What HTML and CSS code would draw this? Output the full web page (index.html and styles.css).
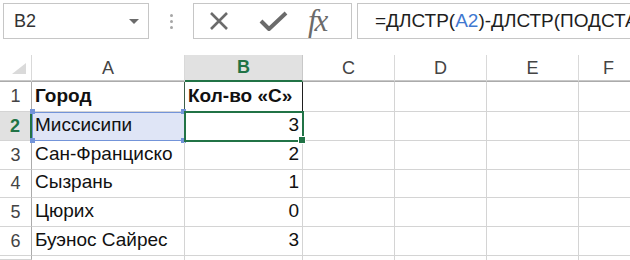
FILE: index.html
```html
<!DOCTYPE html>
<html lang="ru">
<head>
    <meta charset="UTF-8">
    <title>Кол-во «С»</title>
    <link rel="stylesheet" href="styles.css">
</head>
<body>
    <div class="toolbar">
        <div class="name-box">
            <span>B2</span>
            <span class="arrow"></span>
        </div>
        <div class="grip"><i></i><i></i><i></i></div>
        <div class="buttons">
            <svg class="icon" width="22" height="22" viewBox="0 0 22 22">
                <path d="M3 3 L19 19 M19 3 L3 19" stroke="#6b6b6b" stroke-width="2.6" fill="none"/>
            </svg>
            <svg class="icon check" width="29" height="22" viewBox="0 0 29 22">
                <path d="M2 11 L10 19 L27 3" stroke="#6b6b6b" stroke-width="4" fill="none" stroke-linejoin="round"/>
            </svg>
            <span class="fx">fx</span>
        </div>
        <div class="formula">=ДЛСТР(<span class="ref">A2</span>)-ДЛСТР(ПОДСТАВИТЬ(A2;"С";""))</div>
    </div>

    <div class="sheet">
        <div class="corner"><span class="tri"></span></div>
        <div class="col">A</div>
        <div class="col active">B</div>
        <div class="col">C</div>
        <div class="col">D</div>
        <div class="col">E</div>
        <div class="col">F</div>

        <div class="row">1</div>
        <div class="cell bold">Город</div>
        <div class="cell bold b1">Кол-во «С»</div>
        <div class="cell"></div><div class="cell"></div><div class="cell"></div><div class="cell"></div>

        <div class="row active">2</div>
        <div class="cell ref-range">Миссисипи</div>
        <div class="cell num current">3</div>
        <div class="cell"></div><div class="cell"></div><div class="cell"></div><div class="cell"></div>

        <div class="row">3</div>
        <div class="cell">Сан-Франциско</div>
        <div class="cell num">2</div>
        <div class="cell"></div><div class="cell"></div><div class="cell"></div><div class="cell"></div>

        <div class="row">4</div>
        <div class="cell">Сызрань</div>
        <div class="cell num">1</div>
        <div class="cell"></div><div class="cell"></div><div class="cell"></div><div class="cell"></div>

        <div class="row">5</div>
        <div class="cell">Цюрих</div>
        <div class="cell num">0</div>
        <div class="cell"></div><div class="cell"></div><div class="cell"></div><div class="cell"></div>

        <div class="row">6</div>
        <div class="cell">Буэнос Сайрес</div>
        <div class="cell num">3</div>
        <div class="cell"></div><div class="cell"></div><div class="cell"></div><div class="cell"></div>

        <div class="row"></div>
        <div class="cell"></div><div class="cell"></div>
        <div class="cell"></div><div class="cell"></div><div class="cell"></div><div class="cell"></div>
    </div>
</body>
</html>
```

FILE: styles.css
```css
body {
    margin: 0;
    background: #ffffff;
    font-family: "Liberation Sans", Arial, sans-serif;
    color: #1e1e1e;
    overflow: hidden;
    width: 630px;
    height: 260px;
}

/* formula bar */

.toolbar {
    display: flex;
    align-items: stretch;
    height: 36px;
    padding: 3px 0 16px 3px;
}

.name-box {
    width: 146px;
    border: 1px solid #c6c6c6;
    display: flex;
    align-items: center;
    justify-content: space-between;
    padding: 0 9px 0 10px;
    box-sizing: border-box;
    font-size: 18px;
    color: #333;
}

.name-box .arrow {
    width: 0;
    height: 0;
    border-left: 5px solid transparent;
    border-right: 5px solid transparent;
    border-top: 5px solid #6b6b6b;
}

.grip {
    width: 44px;
    display: flex;
    flex-direction: column;
    align-items: center;
    justify-content: center;
    gap: 3px;
}

.grip i {
    width: 3px;
    height: 3px;
    background: #a6a6a6;
    border-radius: 50%;
}

.buttons {
    width: 159px;
    border: 1px solid #c6c6c6;
    box-sizing: border-box;
    display: flex;
    align-items: center;
    padding-left: 14px;
}

.buttons .check {
    margin-left: 29px;
}

.fx {
    margin-left: 20px;
    font-family: "Liberation Serif", "Times New Roman", serif;
    font-style: italic;
    font-size: 31px;
    color: #6b6b6b;
    letter-spacing: -2px;
    line-height: 1;
    margin-top: -2px;
}

.formula {
    flex: 1;
    margin-left: 5px;
    border: 1px solid #c6c6c6;
    border-right: none;
    padding: 0 0 0 17px;
    font-size: 19px;
    line-height: 34px;
    white-space: nowrap;
    overflow: hidden;
    color: #1e1e1e;
}

.formula .ref {
    color: #3f78d0;
}

/* grid */

.sheet {
    display: grid;
    grid-template-columns: 32px 153px 118px 92px 92px 92px 60px;
    grid-template-rows: 27px 30px 29px 29px 28px 29px 29px 4px;
    font-size: 19px;
}

.corner,
.col {
    border-bottom: 1px solid #ababab;
    border-right: 1px solid #d9d9d9;
    box-shadow: inset 0 -1px 0 #c8c8c8;
}

.corner {
    position: relative;
}

.corner .tri {
    position: absolute;
    right: 5px;
    bottom: 7px;
    width: 0;
    height: 0;
    border-left: 14px solid transparent;
    border-bottom: 11px solid #dadada;
}

.col {
    display: flex;
    align-items: center;
    justify-content: center;
    color: #444;
    font-size: 18px;
}

.col.active {
    background: #e1e1e1;
    color: #217346;
    font-weight: bold;
    border-bottom: 2px solid #217346;
    box-shadow: none;
    border-right-color: #c8c8c8;
}

.row {
    display: flex;
    align-items: center;
    justify-content: center;
    color: #444;
    font-size: 18px;
    border-right: 1px solid #ababab;
    border-bottom: 1px solid #d4d4d4;
}

.row.active {
    background: #e1e1e1;
    color: #217346;
    font-weight: bold;
    border-right: 2px solid #217346;
}

.cell {
    border-right: 1px solid #d4d4d4;
    border-bottom: 1px solid #d4d4d4;
    display: flex;
    align-items: flex-end;
    padding: 0 3px 4px 3px;
    white-space: nowrap;
    position: relative;
    color: #111;
}

.cell.bold {
    font-weight: bold;
}

.cell.num {
    justify-content: flex-end;
}

.b1 {
    border-left: 1px solid #3b5e47;
    border-right: 1px solid #1f1f1f;
    margin-left: -1px;
}

.ref-range {
    background: #dfe5f6;
    outline: 1px solid #7394d9;
    outline-offset: -1px;
}

/* corner handles of the referenced range */
.ref-range::before {
    content: "";
    position: absolute;
    left: -2px;
    top: -3px;
    width: 5px;
    height: 5px;
    background: #7394d9;
    box-shadow: 151px 0 #7394d9, 0 29px #7394d9, 151px 29px #7394d9;
}

.current {
    outline: 2px solid #217346;
    outline-offset: -1px;
    z-index: 1;
}

.current::after {
    content: "";
    position: absolute;
    right: -4px;
    bottom: -4px;
    width: 6px;
    height: 6px;
    background: #217346;
    border: 1px solid #ffffff;
}
```
